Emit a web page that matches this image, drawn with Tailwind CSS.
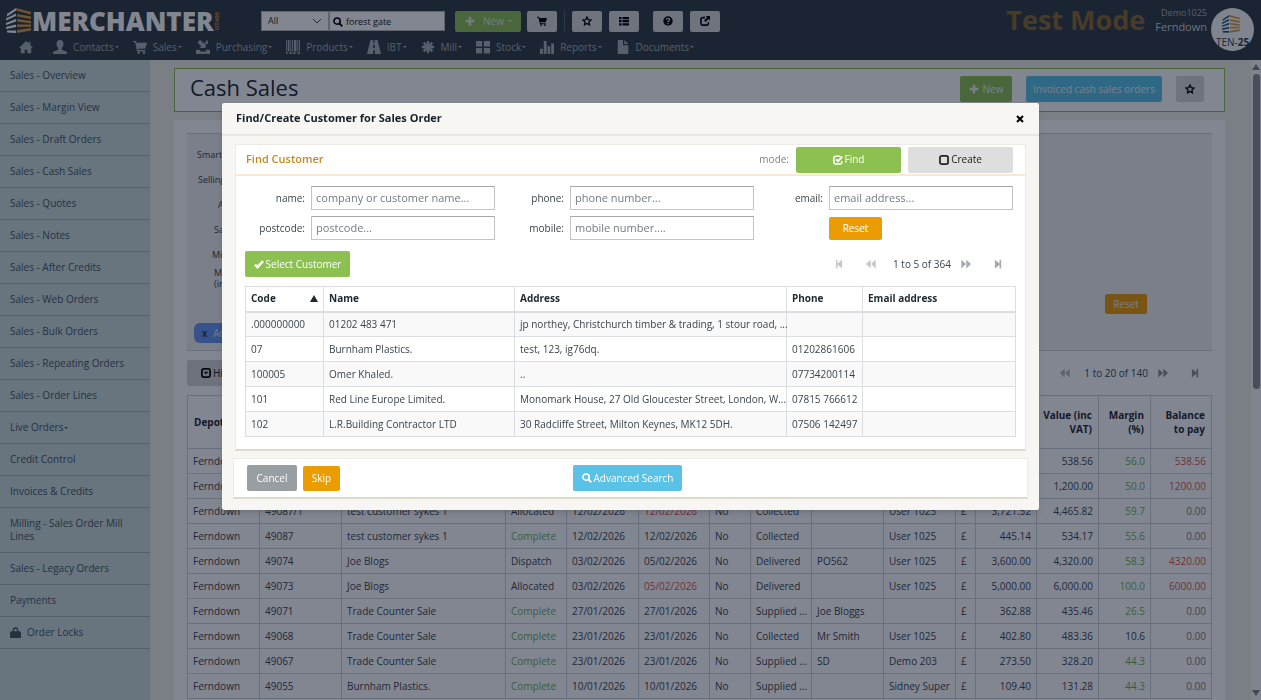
<!doctype html>
<html lang="en">
  <head>
    <meta charset="UTF-8" />
    <meta name="viewport" content="width=device-width, initial-scale=1.0" />
    <title>Merchanter - Cash Sales</title>
    <script src="https://cdn.jsdelivr.net/npm/@tailwindcss/browser@4"></script>
  </head>
  <body class="h-screen overflow-hidden flex flex-col bg-[#eef0e6] font-['Open_Sans','Noto_Sans',sans-serif] text-[10px] text-[#3a444c]">
    <!-- Icon sprite -->
    <svg class="hidden">
      <symbol id="home" viewBox="0 0 16 16"><path d="M8 1 0 9h2v6h4.500v-4h3v4H14V9h2l-3-3V2h-2v2z" /></symbol>
      <symbol id="user" viewBox="0 0 16 16"><path d="M8 0c2.500 0 4 1.800 4 4.500 0 2-1 3.700-2 4.600V11l5 2c.7.400 1 1 1 2v1H0v-1c0-1 .300-1.600 1-2l5-2V9.100C5 8.200 4 6.500 4 4.500 4 1.800 5.500 0 8 0z" /></symbol>
      <symbol id="cart" viewBox="0 0 16 16"><path d="M0 1h3.500l.6 2H16l-2 7H5.800l.4 1.500H14V13H4.800L2.300 2.700H0z" /><circle cx="6.500" cy="14.500" r="1.500" /><circle cx="12.500" cy="14.500" r="1.500" /></symbol>
      <symbol id="import" viewBox="0 0 16 16"><path d="M3 1 5 0l4 4 2-2v7H4l2-2-4-4zM0 11h4l1 2h6l1-2h4v5H0z" /><path d="m11 1 2-1 1 4-2 1z" /></symbol>
      <symbol id="barcode" viewBox="0 0 16 16"><path d="M0 0h1v13H0zM2 0h2v13H2zM5 0h1v13H5zM7 0h1v13H7zM9 0h3v13H9zM13 0h1v13h-1zM15 0h1v13h-1zM0 14h2v2H0zM4 14h3v2H4zM8 14h3v2H8zM13 14h3v2h-3z" /></symbol>
      <symbol id="road" viewBox="0 0 16 16"><path d="M4 0h3.300v3h1.400V0H12l4 16H9v-4H7v4H0zm3.200 5-.2 4h2l-.2-4z" /></symbol>
      <symbol id="cog" viewBox="0 0 16 16"><path d="M8 1v14M1 8h14M3 3l10 10M13 3 3 13" stroke="currentColor" stroke-width="2.600" /><circle cx="8" cy="8" r="4" /></symbol>
      <symbol id="grid" viewBox="0 0 16 16"><path d="M0 1h7v6.500H0zM9 1h7v6.500H9zM0 9h7v6.500H0zM9 9h7v6.500H9z" /></symbol>
      <symbol id="bars" viewBox="0 0 16 16"><path d="M0 10h3.300v6H0zM4.300 1h3.300v15H4.300zM8.600 7h3.200v9H8.600zM12.800 4H16v12h-3.200z" /></symbol>
      <symbol id="file" viewBox="0 0 16 16"><path d="M2 0h6v6h6v10H2zm7.500 0L14 4.500H9.500z" /></symbol>
      <symbol id="plus" viewBox="0 0 16 16"><path d="M6 1h4v5h5v4h-5v5H6v-5H1V6h5z" /></symbol>
      <symbol id="star" viewBox="0 0 16 16"><path d="m8 1.500 1.900 4.300 4.600.5-3.400 3.200.9 4.700L8 11.800l-4 2.400.9-4.700L1.500 6.300l4.600-.5z" fill="none" stroke="currentColor" stroke-width="2" /></symbol>
      <symbol id="list" viewBox="0 0 16 16"><path d="M0 1.500h4v3.500H0zM5.500 1.500H16v3.500H5.500zM0 6.500h4V10H0zM5.500 6.500H16V10H5.500zM0 11.500h4V15H0zM5.500 11.500H16V15H5.500z" /></symbol>
      <symbol id="help" viewBox="0 0 16 16"><circle cx="8" cy="8" r="7.500" /><path d="M5.300 6C5.500 4.300 6.500 3.700 8 3.700c1.600 0 2.600.9 2.600 2.200C10.600 7.500 8 7.800 8 9.500M8 10.800V13" fill="none" stroke="#d9d9d9" stroke-width="2" /></symbol>
      <symbol id="share" viewBox="0 0 16 16"><path d="M8 2.500H4A2.500 2.500 0 0 0 1.500 5v7A2.500 2.500 0 0 0 4 14.500h7a2.500 2.500 0 0 0 2.500-2.500v-2" fill="none" stroke="currentColor" stroke-width="2.600" /><path d="M9 0h7v7l-2.300-2.300L9 9.500 6.500 7l4.800-4.700z" /></symbol>
      <symbol id="search" viewBox="0 0 16 16"><circle cx="6.500" cy="6.500" r="5" fill="none" stroke="currentColor" stroke-width="2.600" /><path d="m10 10 5 5" stroke="currentColor" stroke-width="3" /></symbol>
      <symbol id="lock" viewBox="0 0 16 16"><path d="M4 6V4.500a4 4 0 0 1 8 0V6h2.500l1.500 2v8H0V8l1.500-2zm2 0h4V4.500a2 2 0 0 0-4 0z" /></symbol>
      <symbol id="check" viewBox="0 0 16 16"><path d="m1.500 9 4 4L14.500 3.500" fill="none" stroke="currentColor" stroke-width="4" /></symbol>
      <symbol id="checked" viewBox="0 0 16 16"><path d="M12 2H4a2.500 2.500 0 0 0-2.500 2.500V12A2.500 2.500 0 0 0 4 14.500h7.500A2.500 2.500 0 0 0 14 12V9.500" fill="none" stroke="currentColor" stroke-width="2.400" /><path d="m5 7 3 3 7-7.500" fill="none" stroke="currentColor" stroke-width="3" /></symbol>
      <symbol id="unchecked" viewBox="0 0 16 16"><rect x="1.500" y="1.500" width="13" height="13" rx="3" fill="none" stroke="currentColor" stroke-width="2.800" /></symbol>
      <symbol id="expand" viewBox="0 0 16 16"><rect x="1.500" y="1.500" width="13" height="13" rx="2.500" fill="none" stroke="currentColor" stroke-width="2.800" /><path d="M4.500 6h7L8 10.500z" /></symbol>
      <symbol id="first" viewBox="0 0 16 16"><path d="M3 1h2.500v6L13 1v14L5.500 9v6H3z" /></symbol>
      <symbol id="prev" viewBox="0 0 16 16"><path d="m0 8 7.500-7v14zM8 8l7.500-7v14z" /></symbol>
      <symbol id="next" viewBox="0 0 16 16"><path d="M.5 1 8 8 .5 15zM8.500 1 16 8l-7.500 7z" /></symbol>
      <symbol id="last" viewBox="0 0 16 16"><path d="M13 1h-2.500v6L3 1v14l7.500-6v6H13z" /></symbol>
      <symbol id="tower-l" viewBox="0 0 26 26"><path d="M1 6 10 0v2.500L1 8.500zM0 10.500l10-5V8L0 12.500zM0 15l10-4v2.500L0 17zM0 19l10-2.500V19L0 21zM1 22.500h9V25l-9-.5z" /></symbol>
      <symbol id="tower-r" viewBox="0 0 26 26"><path d="m10 0 15 4v2.500L10 2.500zM11 6l14 2.500V11L11 8.500zM11 11l14 2v2.500L11 13.500zM11 16.500h14v2.300L11 19zM11 22l14-2v2.500L11 25z" /></symbol>
    </svg>

    <header class="h-[60px] shrink-0 flex justify-between bg-[#303b42] text-[#a9b0b4]">
      <div class="pl-1.5">
        <div class="flex items-center h-[38px] pt-1">
          <a href="#" class="flex items-center w-[255px]">
            <svg class="size-[26px]"><use href="#tower-l" fill="#fff" /><use href="#tower-r" fill="#dd9c3c" /></svg>
            <span class="text-[26px] leading-none font-extrabold text-white">MERCHANTER</span>
            <span class="text-[6px] leading-none font-bold text-[#c98f35] [writing-mode:sideways-lr]">UT400</span>
          </a>
          <div class="relative">
            <select aria-label="Search in" class="appearance-none w-[68px] h-5 pl-1.5 bg-white border border-[#bbb] text-[9px] text-[#222]">
              <option>All</option>
            </select>
            <svg class="absolute right-2 top-1.5 w-2 h-2" viewBox="0 0 8 8"><path d="m0 2 4 4 4-4" fill="none" stroke="#444" /></svg>
          </div>
          <div class="relative">
            <input type="text" aria-label="Search" value="forest gate" class="block w-[116px] h-5 pl-4 bg-white border border-[#bbb] text-[9px] text-[#111]" />
            <svg class="absolute left-1 top-1.5 size-[10px] text-black" fill="currentColor"><use href="#search" /></svg>
          </div>
          <button class="flex items-center gap-2 ml-2.5 w-[66px] h-[21px] pl-2.5 rounded-xs bg-[#8cc152] text-[#e4e4e4]">
            <svg class="size-[10px]" fill="currentColor"><use href="#plus" /></svg>
            <span>New</span>
            <span class="-ml-1 border-x-2 border-t-2 border-x-transparent"></span>
          </button>
          <div class="flex items-center pl-1.5 text-black">
            <button aria-label="Basket" class="grid place-items-center w-[30px] h-[21px] rounded-xs bg-[#d9d9d9]"><svg class="size-[10px]" fill="currentColor"><use href="#cart" /></svg></button>
            <span class="mx-[7px] w-px h-5 bg-[#5b646b]"></span>
            <button aria-label="Favourite" class="grid place-items-center w-[30px] h-[21px] rounded-xs bg-[#d9d9d9]"><svg class="size-[10px]" fill="currentColor"><use href="#star" /></svg></button>
            <button aria-label="List" class="grid place-items-center w-[30px] h-[21px] ml-[7px] rounded-xs bg-[#d9d9d9]"><svg class="size-[10px]" fill="currentColor"><use href="#list" /></svg></button>
            <button aria-label="Help" class="grid place-items-center w-[30px] h-[21px] ml-3.5 rounded-xs bg-[#d9d9d9]"><svg class="size-[10px]" fill="currentColor"><use href="#help" /></svg></button>
            <button aria-label="Open in new window" class="grid place-items-center w-[30px] h-[21px] ml-[7px] rounded-xs bg-[#d9d9d9]"><svg class="size-[10px]" fill="currentColor"><use href="#share" /></svg></button>
          </div>
        </div>
        <nav id="nav" class="flex items-center gap-3.5 h-[18px] pl-[13px]"></nav>
      </div>
      <div class="flex items-start">
        <div class="mr-2.5 mt-1.5 text-[27px] leading-7 font-bold text-[#8b6a2c]">Test Mode</div>
        <div class="text-right mr-1 mt-1.5">
          <div class="text-[9px] leading-[14px]">Demo1025</div>
          <div class="text-[11px] leading-[14px] text-[#cfd3d5]">Ferndown</div>
        </div>
        <div class="flex flex-col items-center mt-2 mr-[7px] size-[43px] pt-[7px] rounded-full bg-[#fafafa]">
          <svg class="size-[22px]"><use href="#tower-l" fill="#1d5570" transform="scale(.84)" /><use href="#tower-r" fill="#dd9c3c" transform="scale(.84)" /></svg>
          <span class="text-[10px] leading-[10px] text-[#1d4257]">TEN-<b>25</b></span>
        </div>
      </div>
    </header>

    <div class="flex flex-1 min-h-0">
      <aside id="sidebar" class="w-[150px] shrink-0 bg-[#cadcd8] text-[#465660]"></aside>

      <main class="flex-1 min-w-0 flex flex-col gap-2 pl-6 pr-[26px] pt-2">
        <div class="flex items-center justify-between h-11 shrink-0 pl-[15px] pr-5 border border-[#8cc152] bg-white">
          <h1 class="pb-1.5 text-[22px] text-[#1d2830]">Cash Sales</h1>
          <div class="flex gap-3.5 items-center pb-0.5">
            <button class="flex items-center justify-center gap-1 w-[52px] h-[26px] rounded-xs bg-[#8cc152] text-[#eee]">
              <svg class="size-[10px]" fill="currentColor"><use href="#plus" /></svg>New
            </button>
            <button class="w-[136px] h-[26px] rounded-xs bg-[#59c2e6] text-[#eee]">Invoiced cash sales orders</button>
            <button aria-label="Favourite" class="grid place-items-center w-[28px] h-[26px] rounded-xs bg-[#d9d9d9] text-black"><svg class="size-[10px]" fill="currentColor"><use href="#star" /></svg></button>
          </div>
        </div>

        <div class="flex-1 bg-white pl-[13px] pr-[13px] pt-[13px]">
          <section class="relative h-[218px] pt-2 border-y border-[#cfd2d2] bg-[#eef0f0] text-[9px]">
            <div class="h-[25px] pl-2.5 leading-[25px]">Smart</div>
            <div class="h-[25px] pl-[11px] leading-[25px]">Selling</div>
            <div class="h-[25px] pl-[31px] leading-[25px]">A</div>
            <div class="h-[25px] pl-[27px] leading-[25px]">Sa</div>
            <div class="h-[25px] pl-[25px] leading-[25px]">Mi</div>
            <div class="pl-[27px] leading-[11px]">M<br />(in</div>
            <button class="absolute right-[65px] top-[160px] w-[42px] h-5 rounded-xs bg-[#eb9c00] text-[#eee] text-[10px]">Reset</button>
            <button class="absolute left-[7px] bottom-[7px] flex items-center gap-1.5 w-20 h-5 pl-2 rounded-md bg-[#6797f0] text-[10px] text-[#e4e4e4]"><span class="text-black">x</span>Add</button>
          </section>

          <div class="flex items-center justify-between h-[44px]">
            <button class="flex items-center gap-0.5 w-24 h-[26px] pl-3.5 rounded-xs bg-[#d6d6d6] text-[#222]">
              <svg class="size-[10px] text-black" fill="currentColor"><use href="#expand" /></svg>Hide
            </button>
            <div class="flex items-center pr-3 text-[#8d9296]">
              <button aria-label="Previous page" class="mr-3.5 text-[#b2b6ba]"><svg class="block size-[10px]" fill="currentColor"><use href="#prev" /></svg></button>
              <span class="text-[#3a444c]">1 to 20 of 140</span>
              <button aria-label="Next page" class="ml-2.5"><svg class="block size-[10px]" fill="currentColor"><use href="#next" /></svg></button>
              <button aria-label="Last page" class="ml-[22px]"><svg class="block size-[10px]" fill="currentColor"><use href="#last" /></svg></button>
            </div>
          </div>

          <table class="w-full table-fixed border-collapse [&_td]:border [&_td]:border-[#cdd0d4] [&_td]:whitespace-nowrap [&_th]:border [&_th]:border-[#cdd0d4] [&_th]:px-1.5">
            <colgroup>
              <col class="w-[72px]" /><col class="w-[82px]" /><col class="w-[164px]" /><col class="w-[61px]" /><col class="w-[72px]" />
              <col class="w-[71px]" /><col class="w-[41px]" /><col class="w-[61px]" /><col class="w-[72px]" /><col class="w-[72px]" />
              <col class="w-[20px]" /><col class="w-[61px]" /><col class="w-[62px]" /><col class="w-[52px]" /><col class="w-[61px]" />
            </colgroup>
            <thead>
              <tr class="h-[53px] text-left leading-[14px] text-[#1d2830]">
                <th>Depot</th><th></th><th></th><th></th><th></th><th></th><th></th><th></th><th></th><th></th><th></th><th></th>
                <th class="text-right">Value (inc VAT)</th>
                <th class="text-right">Margin (%)</th>
                <th class="text-right">Balance to&nbsp;pay</th>
              </tr>
            </thead>
            <tbody id="orders"></tbody>
          </table>
        </div>
      </main>

      <!-- Scrollbar -->
      <div class="w-2.5 flex flex-col items-center justify-between py-1 bg-[#fafafa]">
        <div class="flex flex-col items-center gap-1">
          <span class="border-x-4 border-b-[6px] border-x-transparent border-b-[#7f8386]"></span>
          <span class="w-[7px] h-[315px] rounded-full bg-[#8b8e92]"></span>
        </div>
        <span class="border-x-4 border-t-[6px] border-x-transparent border-t-[#7f8386]"></span>
      </div>
    </div>

    <!-- Customer dialog -->
    <div class="fixed inset-0 flex justify-center items-start pt-[103px] bg-[#060e24]/50">
      <div role="dialog" aria-labelledby="dialogTitle" class="w-[817px] max-w-full rounded-xs bg-[#f7f6f2] pb-[11px] shadow-md">
        <div class="flex items-center justify-between h-[33px] pl-3.5 pr-[15px] border-b-2 border-[#e8e7e2]">
          <h2 id="dialogTitle" class="text-[11px] font-bold text-[#14202c]">Find/Create Customer for Sales Order</h2>
          <button aria-label="Close" class="text-black"><svg class="block size-2" viewBox="0 0 8 8"><path d="m1 1 6 6M7 1 1 7" stroke="currentColor" stroke-width="2" /></svg></button>
        </div>

        <section class="mx-[13px] mt-2 border border-[#ecebe6] border-b-2 border-b-[#dcdbcb] bg-white pb-3">
          <div class="flex items-center h-[31px] pl-2.5 pr-3 border-b-2 border-[#fae8d0]">
            <h3 class="flex-1 text-[11px] font-semibold text-[#c88a20]">Find Customer</h3>
            <span class="mr-[7px] text-[#7d8387]">mode:</span>
            <button class="flex items-center justify-center gap-0.5 w-[105px] h-[26px] rounded-xs bg-[#8cc152] text-white"><svg class="size-[10px]" fill="currentColor"><use href="#checked" /></svg>Find</button>
            <button class="flex items-center justify-center gap-0.5 w-[105px] h-[26px] ml-[7px] rounded-xs bg-[#dedede] text-[#222]"><svg class="size-[10px]" fill="currentColor"><use href="#unchecked" /></svg>Create</button>
          </div>

          <form class="grid grid-cols-3 gap-x-2.5 gap-y-1.5 pl-2.5 pr-3 pt-2.5">
            <div class="flex items-center gap-1.5">
              <label for="name" class="w-[59px] text-right">name:</label>
              <input id="name" type="text" placeholder="company or customer name..." class="flex-1 min-w-0 h-6 px-1 pb-0.5 border border-[#c4c4c4] border-t-[#a8a8a8] text-[11px] placeholder-[#747b85]" />
            </div>
            <div class="flex items-center gap-1.5">
              <label for="phone" class="w-[59px] text-right">phone:</label>
              <input id="phone" type="text" placeholder="phone number..." class="flex-1 min-w-0 h-6 px-1 pb-0.5 border border-[#c4c4c4] border-t-[#a8a8a8] text-[11px] placeholder-[#747b85]" />
            </div>
            <div class="flex items-center gap-1.5">
              <label for="email" class="w-[59px] text-right">email:</label>
              <input id="email" type="text" placeholder="email address..." class="flex-1 min-w-0 h-6 px-1 pb-0.5 border border-[#c4c4c4] border-t-[#a8a8a8] text-[11px] placeholder-[#747b85]" />
            </div>
            <div class="flex items-center gap-1.5">
              <label for="postcode" class="w-[59px] text-right">postcode:</label>
              <input id="postcode" type="text" placeholder="postcode..." class="flex-1 min-w-0 h-6 px-1 pb-0.5 border border-[#c4c4c4] border-t-[#a8a8a8] text-[11px] placeholder-[#747b85]" />
            </div>
            <div class="flex items-center gap-1.5">
              <label for="mobile" class="w-[59px] text-right">mobile:</label>
              <input id="mobile" type="text" placeholder="mobile number...." class="flex-1 min-w-0 h-6 px-1 pb-0.5 border border-[#c4c4c4] border-t-[#a8a8a8] text-[11px] placeholder-[#747b85]" />
            </div>
            <div class="flex items-center pl-[65px]">
              <button type="reset" class="w-[53px] h-[23px] rounded-xs bg-[#eb9c00] text-white">Reset</button>
            </div>
          </form>

          <div class="flex items-center justify-between pl-[9px] pr-[22px] mt-[11px]">
            <button class="flex items-center justify-center gap-0.5 w-[105px] h-[26px] rounded-xs bg-[#8cc152] text-white"><svg class="size-[10px]" fill="currentColor"><use href="#check" /></svg>Select Customer</button>
            <div class="flex items-center text-[#a6a9af]">
              <button aria-label="First page" class="mr-[22px] text-[#c6c8cc]"><svg class="block size-[10px]" fill="currentColor"><use href="#first" /></svg></button>
              <button aria-label="Previous page" class="mr-[17px] text-[#c6c8cc]"><svg class="block size-[10px]" fill="currentColor"><use href="#prev" /></svg></button>
              <span class="text-[#3a444c]">1 to 5 of 364</span>
              <button aria-label="Next page" class="ml-2.5"><svg class="block size-[10px]" fill="currentColor"><use href="#next" /></svg></button>
              <button aria-label="Last page" class="ml-[22px]"><svg class="block size-[10px]" fill="currentColor"><use href="#last" /></svg></button>
            </div>
          </div>

          <div class="pl-[9px] pr-2.5 mt-[9px]">
            <table class="w-full table-fixed border-collapse text-left [&_td]:border [&_td]:border-[#dcdee2] [&_td]:pl-[5px] [&_td]:whitespace-nowrap [&_th]:border [&_th]:border-[#dcdee2] [&_th]:px-[5px]">
              <colgroup>
                <col class="w-[78px]" /><col class="w-[191px]" /><col class="w-[272px]" /><col class="w-[76px]" /><col class="w-[153px]" />
              </colgroup>
              <thead>
                <tr class="h-[25px] border-b-2 border-[#dcdee2] text-[#1d2830]">
                  <th>
                    <div class="flex items-center justify-between">Code <span class="border-x-4 border-b-[7px] border-x-transparent"></span></div>
                  </th>
                  <th>Name</th><th>Address</th><th>Phone</th><th>Email address</th>
                </tr>
              </thead>
              <tbody id="customers"></tbody>
            </table>
          </div>
        </section>

        <div class="flex items-center h-[41px] mx-[11px] mt-[7px] pl-[13px] border border-[#ecebe6] border-b-2 border-b-[#dcdbcb] bg-white">
          <div class="flex items-center gap-1.5 w-[326px]">
            <button class="w-[50px] h-[26px] rounded-xs bg-[#999ea3] text-white">Cancel</button>
            <button class="w-[37px] h-[25px] rounded-xs bg-[#eb9c00] text-white">Skip</button>
          </div>
          <button class="flex items-center justify-center gap-0.5 w-[109px] h-[26px] rounded-xs bg-[#59c2e6] text-white"><svg class="size-[10px]" fill="currentColor"><use href="#search" /></svg>Advanced Search</button>
        </div>
      </div>
    </div>

    <script>
      const caret = '<span class="ml-px border-x-2 border-t-2 border-x-transparent"></span>';

      const nav = [
        ["home", ""], ["user", "Contacts"], ["cart", "Sales"], ["import", "Purchasing"], ["barcode", "Products"],
        ["road", "IBT"], ["cog", "Mill"], ["grid", "Stock"], ["bars", "Reports"], ["file", "Documents"]
      ];
      document.getElementById("nav").innerHTML = nav.map(([icon, text]) => `
        <a href="#" aria-label="${text || "Home"}" class="flex items-center gap-1.5 first:mr-1.5">
          <svg class="size-[14px]" fill="currentColor"><use href="#${icon}" /></svg>
          ${text ? `<span class="flex items-center">${text}${caret}</span>` : ""}
        </a>`).join("");

      const links = [
        "Sales - Overview", "Sales - Margin View", "Sales - Draft Orders", "Sales - Cash Sales", "Sales - Quotes",
        "Sales - Notes", "Sales - After Credits", "Sales - Web Orders", "Sales - Bulk Orders", "Sales - Repeating Orders",
        "Sales - Order Lines", "Live Orders", "Credit Control", "Invoices & Credits", "Milling - Sales Order Mill Lines",
        "Sales - Legacy Orders", "Payments", "Order Locks"
      ];
      document.getElementById("sidebar").innerHTML = links.map((text) => `
        <a href="#" class="flex items-center px-2.5 py-[9px] border-b border-[#a2b4b2] leading-[13px]">
          ${text === "Order Locks" ? '<svg class="size-[11px] mr-1.5" fill="currentColor"><use href="#lock" /></svg>' : ""}
          <span>${text}</span>${text === "Live Orders" ? caret : ""}
        </a>`).join("");

      const customers = [
        [".000000000", "01202 483 471", "jp northey, Christchurch timber & trading, 1 stour road, ...", "", ""],
        ["07", "Burnham Plastics.", "test, 123, ig76dq.", "01202861606", ""],
        ["100005", "Omer Khaled.", "..", "07734200114", ""],
        ["101", "Red Line Europe Limited.", "Monomark House, 27 Old Gloucester Street, London, W...", "07815 766612", ""],
        ["102", "L.R.Building Contractor LTD", "30 Radcliffe Street, Milton Keynes, MK12 5DH.", "07506 142497", ""]
      ];
      document.getElementById("customers").innerHTML = customers.map((row) =>
        `<tr class="h-[25px] odd:bg-[#f9f9f9]">${row.map((cell) => `<td>${cell}</td>`).join("")}</tr>`
      ).join("");

      const orders = [
        ["Ferndown", "", "", "", "", "", "", "", "", "", "", "", "538.56", "56.0", "538.56"],
        ["Ferndown", "", "", "", "", "", "", "", "", "", "", "", "1,200.00", "50.0", "1200.00"],
        ["Ferndown", "49087/1", "test customer sykes 1", "Allocated", "12/02/2026", "12/02/2026", "No", "Collected", "", "User 1025", "£", "3,721.52", "4,465.82", "59.7", "0.00"],
        ["Ferndown", "49087", "test customer sykes 1", "Complete", "12/02/2026", "12/02/2026", "No", "Collected", "", "User 1025", "£", "445.14", "534.17", "55.6", "0.00"],
        ["Ferndown", "49074", "Joe Blogs", "Dispatch", "03/02/2026", "05/02/2026", "No", "Delivered", "PO562", "User 1025", "£", "3,600.00", "4,320.00", "58.3", "4320.00"],
        ["Ferndown", "49073", "Joe Blogs", "Allocated", "03/02/2026", "05/02/2026", "No", "Delivered", "", "User 1025", "£", "5,000.00", "6,000.00", "100.0", "6000.00"],
        ["Ferndown", "49071", "Trade Counter Sale", "Complete", "27/01/2026", "27/01/2026", "No", "Supplied ...", "Joe Bloggs", "", "£", "362.88", "435.46", "26.5", "0.00"],
        ["Ferndown", "49068", "Trade Counter Sale", "Complete", "23/01/2026", "23/01/2026", "No", "Collected", "Mr Smith", "User 1025", "£", "402.80", "483.36", "10.6", "0.00"],
        ["Ferndown", "49067", "Trade Counter Sale", "Complete", "23/01/2026", "23/01/2026", "No", "Supplied ...", "SD", "Demo 203", "£", "273.50", "328.20", "44.3", "0.00"],
        ["Ferndown", "49055", "Burnham Plastics.", "Complete", "10/01/2026", "10/01/2026", "No", "Supplied ...", "", "Sidney Super", "£", "109.40", "131.28", "44.3", "0.00"]
      ];

      function cellClass(row, i) {
        let cls = i > 10 ? "text-right pr-[5px] " : "pl-[5px] ";
        if (row[i] === "Complete") cls += "text-[#6fae4c]";
        if (i === 5 && row[3] === "Allocated") cls += "text-[#d9534f]";
        if (i === 13 && parseFloat(row[i]) > 20) cls += "text-[#6fae4c]";
        if (i === 14) cls += parseFloat(row[i]) > 0 ? "text-[#d9534f]" : "text-[#777d82]";
        return cls;
      }

      document.getElementById("orders").innerHTML = orders.map((row) =>
        `<tr class="h-[25px]">${row.map((cell, i) => `<td class="${cellClass(row, i)}">${cell}</td>`).join("")}</tr>`
      ).join("");
    </script>
  </body>
</html>
